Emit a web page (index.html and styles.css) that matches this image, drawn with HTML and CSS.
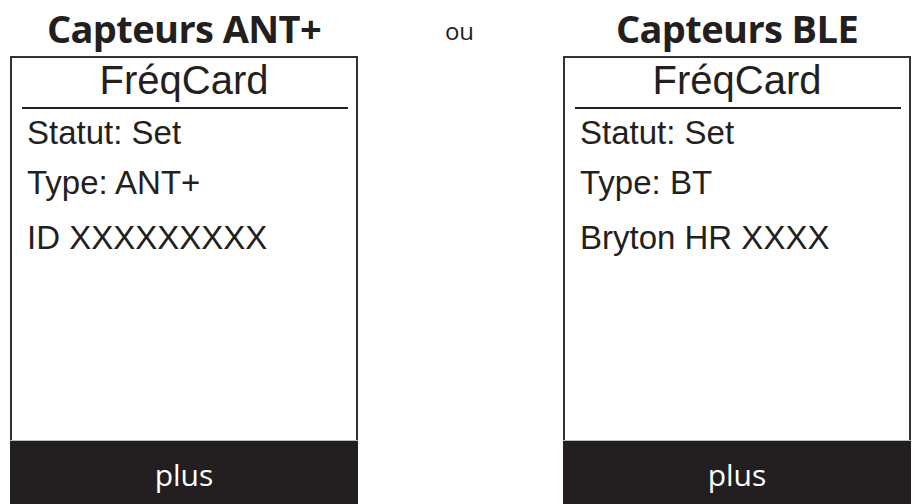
FILE: index.html
```html
<!DOCTYPE html>
<html lang="fr">
<head>
<meta charset="utf-8">
<title>Capteurs</title>
<link rel="stylesheet" href="styles.css">
</head>
<body>
<div class="page">
  <section class="column">
    <h2 class="heading">Capteurs ANT+</h2>
    <div class="device">
      <div class="title">FréqCard</div>
      <div class="rule"></div>
      <div class="info">
        <div class="row">Statut: Set</div>
        <div class="row">Type: ANT+</div>
        <div class="row row-last">ID XXXXXXXXX</div>
      </div>
      <div class="footer">plus</div>
    </div>
  </section>
  <div class="separator">ou</div>
  <section class="column">
    <h2 class="heading">Capteurs BLE</h2>
    <div class="device">
      <div class="title">FréqCard</div>
      <div class="rule"></div>
      <div class="info">
        <div class="row">Statut: Set</div>
        <div class="row">Type: BT</div>
        <div class="row row-last">Bryton HR XXXX</div>
      </div>
      <div class="footer">plus</div>
    </div>
  </section>
</div>
</body>
</html>
```

FILE: styles.css
```css
html, body {
  margin: 0;
  padding: 0;
  background: #ffffff;
  overflow: hidden;
}

.page {
  display: grid;
  grid-template-columns: 348px 205px 348px;
  padding-left: 10px;
  height: 504px;
  overflow: hidden;
  color: #231f20;
}

.column {
  display: flex;
  flex-direction: column;
}

.heading {
  margin: 0;
  height: 56px;
  font-family: "Open Sans", "DejaVu Sans", sans-serif;
  font-weight: 700;
  font-size: 38px;
  line-height: 56px;
  text-align: center;
  letter-spacing: -0.6px;
}

.separator {
  font-family: "Open Sans", "DejaVu Sans", sans-serif;
  font-size: 24px;
  line-height: 40px;
  padding-top: 11px;
  text-align: center;
  padding-right: 2px;
}

.device {
  border: 2px solid #333333;
  display: flex;
  flex-direction: column;
  font-family: "Liberation Sans", Arial, sans-serif;
}

.title {
  font-size: 40px;
  line-height: 44px;
  height: 44px;
  text-align: center;
}

.rule {
  height: 2px;
  background: #231f20;
  margin: 5px 8px 0 10px;
}

.info {
  height: 332px;
  margin-top: -1px;
  padding-left: 15px;
  font-size: 33px;
  line-height: 50px;
}

.row-last {
  margin-top: 5px;
}

.footer {
  height: 72px;
  margin: 0 -2px;
  background: #231f20;
  border-top: 1px solid #bdbdbd;
  color: #ffffff;
  font-family: "Open Sans", "DejaVu Sans", sans-serif;
  font-size: 30px;
  line-height: 68px;
  text-align: center;
}
```
